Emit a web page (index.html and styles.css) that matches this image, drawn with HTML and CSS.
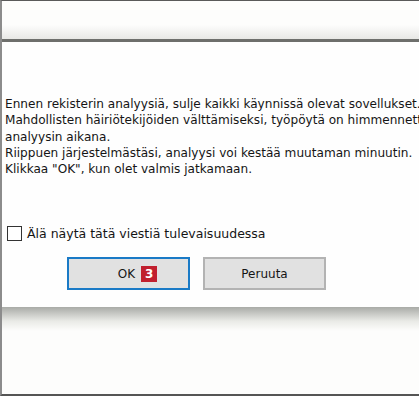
FILE: index.html
```html
<!DOCTYPE html>
<html lang="fi">
<head>
    <meta charset="UTF-8">
    <title>Rekisterin analyysi</title>
    <link rel="stylesheet" href="styles.css">
</head>
<body>
    <div class="frame">
        <div class="titlebar"></div>
        <span class="edge-mark"></span>
        <div class="dialog">
            <div class="message">
                <p>Ennen rekisterin analyysiä, sulje kaikki käynnissä olevat sovellukset.</p>
                <p>Mahdollisten häiriötekijöiden välttämiseksi, työpöytä on himmennetty</p>
                <p>analyysin aikana.</p>
                <p>Riippuen järjestelmästäsi, analyysi voi kestää muutaman minuutin.</p>
                <p>Klikkaa "OK", kun olet valmis jatkamaan.</p>
            </div>
            <label class="check-row">
                <span class="checkbox"></span>
                <span>Älä näytä tätä viestiä tulevaisuudessa</span>
            </label>
            <div class="buttons">
                <button class="btn btn-default">OK <span class="badge">3</span></button>
                <button class="btn">Peruuta</button>
            </div>
        </div>
        <div class="below"></div>
    </div>
</body>
</html>
```
FILE: styles.css
```css
body {
    margin: 0;
    padding: 0;
    background-color: #fff;
}
.frame {
    position: relative;
    width: 419px;
    height: 396px;
    box-sizing: border-box;
    border-top: 1px solid #5a5a5a;
    border-left: 2px solid #8c8c8c;
    border-bottom: 2px solid #555;
    background-color: #fdfdfc;
    overflow: hidden;
    font-family: "DejaVu Sans", sans-serif;
    color: #151515;
    display: flex;
    flex-direction: column;
}
.titlebar {
    height: 38px;
    background: linear-gradient(#fdfdfc 0, #fdfdfc 24px, #e8e8e5 38px);
    border-bottom: 3px solid #6e6f6c;
}
.edge-mark {
    position: absolute;
    left: -2px;
    top: 54px;
    width: 2px;
    height: 9px;
    background-color: #2d3f5a;
}
.dialog {
    padding: 54px 0 17px 3px;
    background-color: #fefefe;
    white-space: nowrap;
}
.message {
    font-size: 12.1px;
    line-height: 16.3px;
}
.message p {
    margin: 0;
}
.check-row {
    display: flex;
    align-items: center;
    gap: 5px;
    margin: 49px 0 0 2px;
    font-size: 12.5px;
}
.checkbox {
    width: 13px;
    height: 13px;
    border: 1px solid #333;
    background-color: #fff;
}
.buttons {
    display: flex;
    gap: 13px;
    margin: 16px 0 0 62px;
}
.btn {
    width: 123px;
    height: 33px;
    box-sizing: border-box;
    background-color: #e1e1e1;
    border: 2px solid #b3b3b3;
    font-family: "DejaVu Sans", sans-serif;
    font-size: 12px;
    color: #151515;
    display: flex;
    align-items: center;
    justify-content: center;
    gap: 6px;
    padding: 0;
}
.btn-default {
    border-color: #1a7ac6;
    padding-left: 18px;
}
.badge {
    display: inline-block;
    width: 16px;
    height: 16px;
    line-height: 16px;
    background-color: #c1202f;
    color: #fff;
    font-weight: bold;
    font-size: 12px;
    text-align: center;
}
.below {
    flex: 1;
    background: linear-gradient(#a9aba7 0, #e9eae6 14px, #fdfdfc 24px);
}
```
